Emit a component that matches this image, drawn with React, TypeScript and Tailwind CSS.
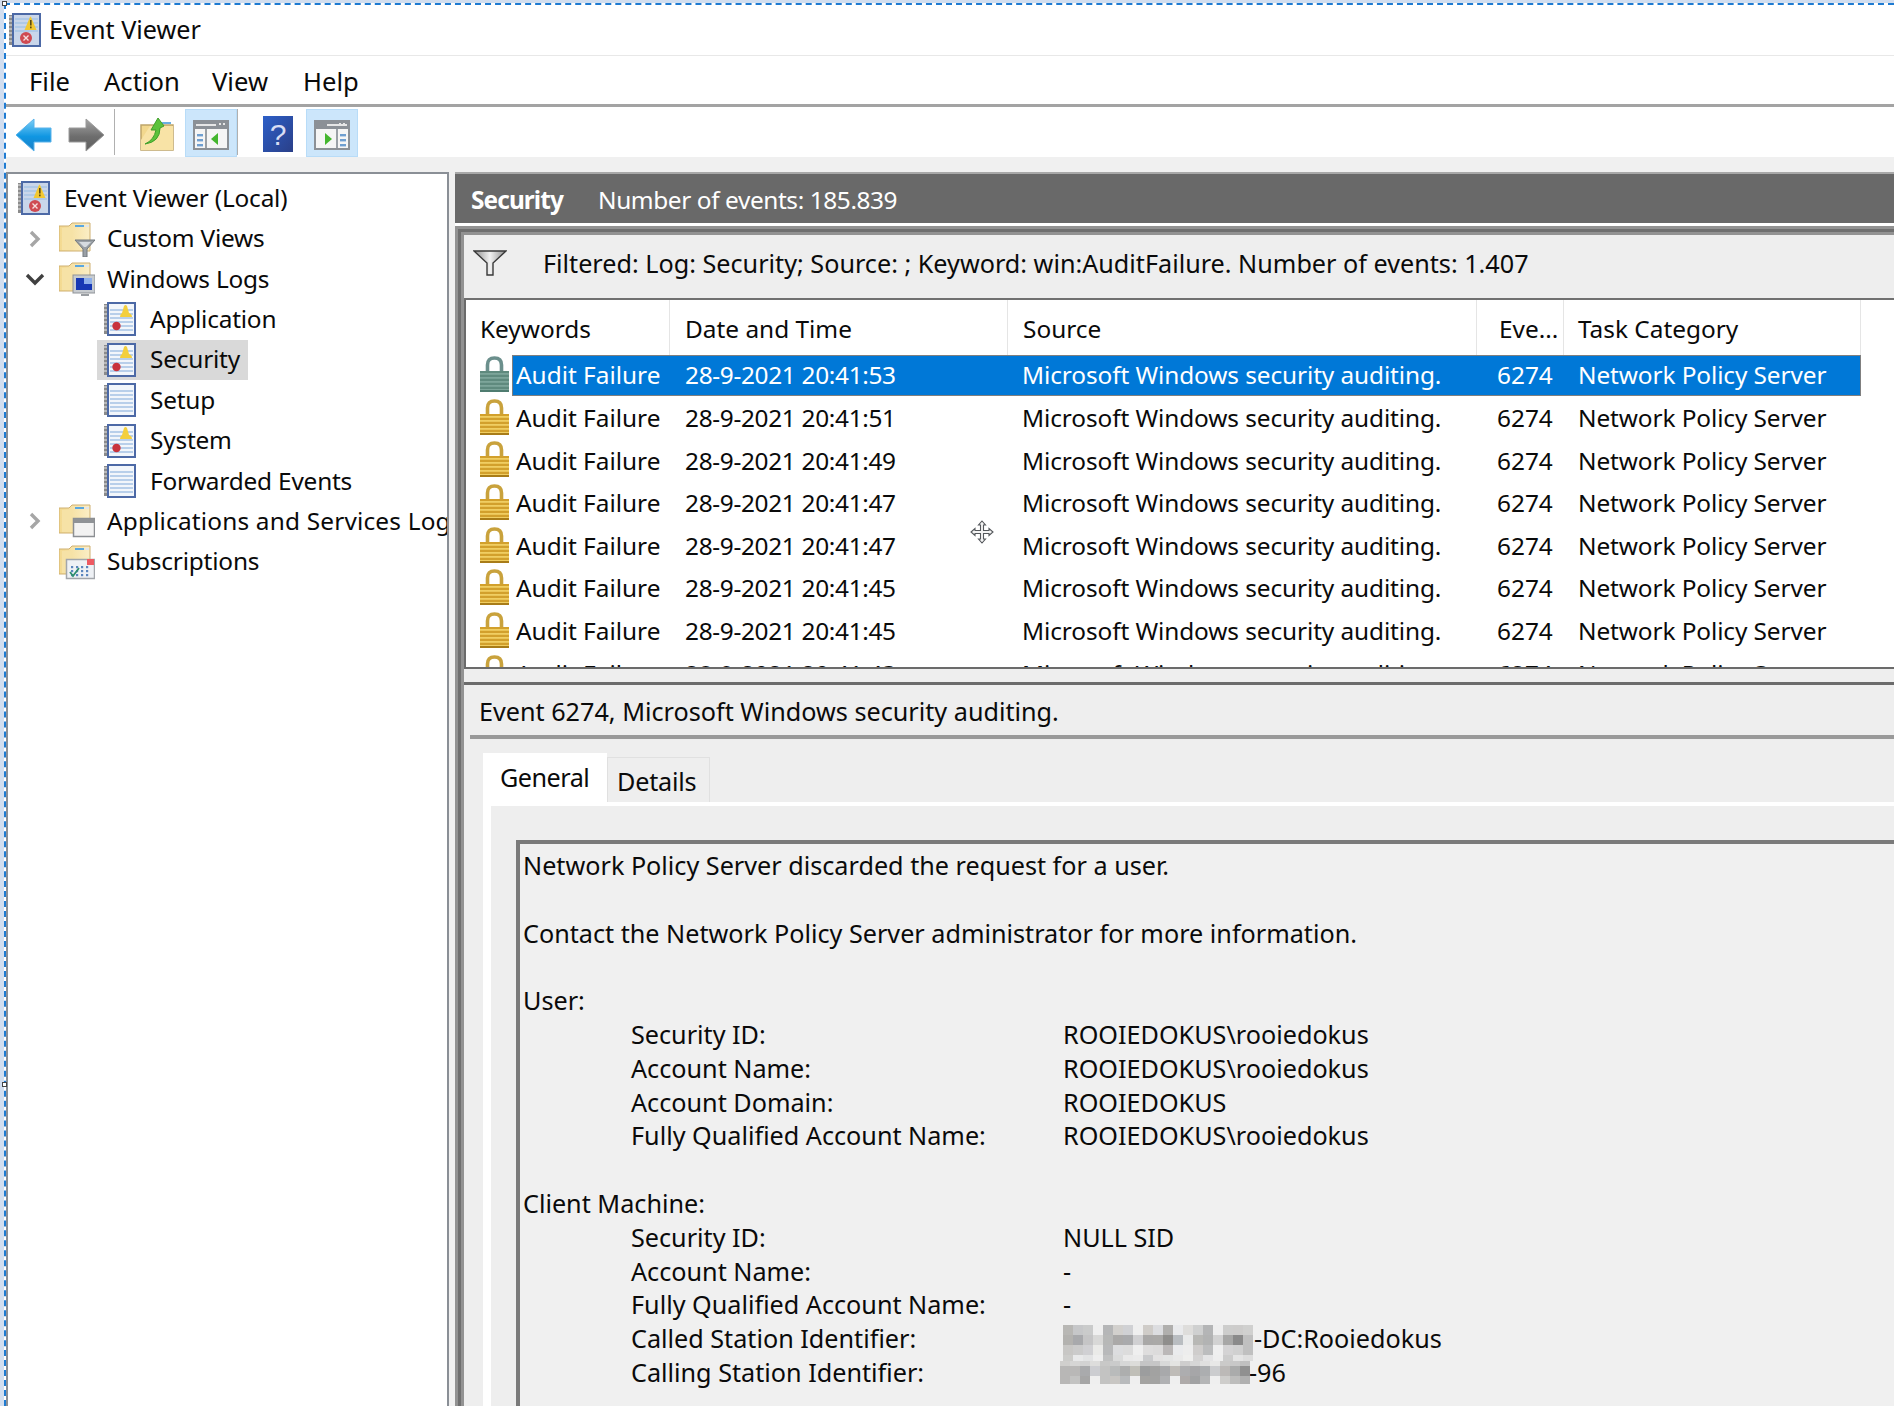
import type { ReactNode } from "react";

const rows = ["20:41:53", "20:41:51", "20:41:49", "20:41:47", "20:41:47", "20:41:45", "20:41:45", "20:41:43"];

// pixelated parts of the redacted station identifiers
const mosaicTop = [
  ["b8b7b4", "c6c7c9", "cacbcb", "efefef", "b5b6b7", "d2d0cd", "d0d1d4", "efefef", "cfccc8", "dcdde0", "b0afad", "e9eaec", "dedddb", "cfd0d0", "b4b5b6", "eeeeee", "cdcdcc", "cdcccb", "d0d0cf"],
  ["b3b2af", "a8a9ac", "c5c5c6", "d8d8d7", "b7b8b7", "aaa9a8", "a9aaac", "d0d0d2", "a9a8a7", "aaa9a7", "8f8e8c", "b9bdc1", "e9eaea", "b8b8b5", "b2b3b3", "d2d2d2", "a7a7a6", "8a8a8a", "c0c0c0"],
  ["c8c7c5", "cbcbcb", "d0d0d3", "eaeae8", "b8b9ba", "dcdddf", "dcdcdc", "efefef", "dedddd", "dcdbdb", "bbb8b8", "eaebed", "ededed", "cfcdcc", "bcbdbe", "efefef", "d4d3d4", "d0d0d0", "c0c0c0"],
  ["ccccca", "e8e9ea", "e2e3e4", "eeeeee", "c0c1c1", "dadbdb", "e9e9e9", "ebebeb", "c9cacc", "e3e2e2", "e4e5e5", "e9e9e9", "efefee", "d4d3d3", "e4e4e5", "eeeeee", "cccccc", "e4e4e4", "dddddd"],
];
const mosaicBottom = [
  ["d0cfcd", "d6d6d5", "d2d2d2", "dddddc", "c8c8c7", "cacbcb", "d6d7d7", "dcdcd9", "c4c4c5", "c6c6c6", "d8d9d9", "e4e4e2", "cecdcd", "d6d6d6", "e0e0df", "e8e8e7", "cbcac9", "c8c8c8", "c0c0c0"],
  ["b8b7b6", "b9b8b7", "a9aaac", "cccdd1", "c3c3c2", "b9bbbb", "adaeae", "c0bfb8", "9c9d9e", "a2a2a1", "a8a9ab", "bfbcb8", "adadaf", "a6a6a8", "acaeb0", "cbccce", "bcb9b7", "aaabab", "909090"],
  ["b8b7b6", "c3c3c2", "a6a6a6", "efefef", "c3c3c2", "c8c6c3", "b8babc", "efefef", "a4a3a1", "a3a3a2", "b0b1b3", "efefef", "aeaaa9", "a1a2a3", "b4b5b6", "efefef", "cecdcb", "bdbdbc", "b0b0b0"],
];

function Mosaic({ data, heights }: { data: string[][]; heights: number[] }) {
  const total = heights.reduce((a, b) => a + b, 0);
  let y = 0;
  return (
    <svg width={190} height={total} viewBox={`0 0 190 ${total}`} shapeRendering="crispEdges">
      {data.map((row, r) => {
        const top = y;
        y += heights[r];
        return row.map((c, i) => (
          <rect key={`${r}-${i}`} x={i * 10} y={top} width={10} height={heights[r]} fill={`#${c}`} />
        ));
      })}
    </svg>
  );
}

function Book({ alert = false, size = 32 }: { alert?: boolean; size?: number }) {
  return (
    <svg width={size} height={(size * 34) / 32} viewBox="0 0 32 34" className="shrink-0">
      <rect x="0" y="2" width="6" height="30" fill="#8b8b8b" />
      {[4, 8, 12, 16, 20, 24, 28].map((y) => (
        <line key={y} x1="0" x2="6" y1={y} y2={y} stroke="#d4d4d4" strokeWidth="1.3" />
      ))}
      <rect x="4" y="1" width="27" height="32" fill="#f2f6fb" stroke="#4c69a6" strokeWidth="2" />
      {[8, 12, 16, 20, 24, 28].map((y) => (
        <line key={y} x1="6" x2="29" y1={y} y2={y} stroke="#a9c6e6" strokeWidth="1.6" />
      ))}
      {alert && (
        <>
          <path d="M16 15 Q16 12 18 11 L20 4 Q21.5 2 23 4 L25 11 Q28 12 28 15 Z" fill="#f3cf3e" />
          <circle cx="12.5" cy="24" r="4.2" fill="#c8323c" />
        </>
      )}
    </svg>
  );
}

function AppIcon() {
  return (
    <svg width="32" height="34" viewBox="0 0 32 34" className="shrink-0">
      <rect x="0" y="2" width="6" height="30" fill="#8b8b8b" />
      {[4, 8, 12, 16, 20, 24, 28].map((y) => (
        <line key={y} x1="0" x2="6" y1={y} y2={y} stroke="#d4d4d4" strokeWidth="1.3" />
      ))}
      <rect x="4" y="1" width="27" height="32" fill="#c9d6ea" stroke="#4c69a6" strokeWidth="2" />
      {[6, 10, 14, 18].map((y) => (
        <line key={y} x1="6" x2="29" y1={y} y2={y} stroke="#a9c6e6" strokeWidth="1.6" />
      ))}
      <path d="M15.5 17 L21 4 Q21.5 3 22 4 L27.5 17 Z" fill="#f2c832" />
      <rect x="21" y="7" width="1.6" height="5.5" fill="#5a4a12" />
      <rect x="21" y="13.5" width="1.6" height="1.8" fill="#5a4a12" />
      <circle cx="17" cy="25" r="6" fill="#cf4a52" />
      <path d="M14.5 22.5 L19.5 27.5 M19.5 22.5 L14.5 27.5" stroke="#f6dede" strokeWidth="1.4" />
    </svg>
  );
}

function Folder({ overlay }: { overlay?: "funnel" | "monitor" | "window" | "calendar" }) {
  return (
    <svg width="36" height="36" viewBox="0 0 36 36" className="shrink-0">
      <defs>
        <linearGradient id="folderFill" x1="0" y1="0" x2="1" y2="0">
          <stop offset="0" stopColor="#f3d98f" />
          <stop offset="1" stopColor="#fbeec6" />
        </linearGradient>
      </defs>
      <path d="M0 5 H10 L13 2 H31 V30 H0 Z" fill="url(#folderFill)" stroke="#cfb070" strokeWidth="1" />
      <path d="M3 7 H13 V29 H3 Z" fill="#f6e2a6" />
      <rect x="16" y="4" width="9" height="2" fill="#5aa7e0" />
      <rect x="26" y="4" width="4" height="2" fill="#e2e6ea" />
      {overlay === "funnel" && (
        <>
          <path d="M16 19 H36 L28 28 V36 H24 V28 Z" fill="#9aa0a6" stroke="#72787e" strokeWidth="1" />
          <path d="M20 21 H32 L27 26 H25 Z" fill="#d6dbe0" />
        </>
      )}
      {overlay === "monitor" && (
        <>
          <rect x="14" y="14" width="22" height="18" fill="#c8ccd0" stroke="#8f9398" strokeWidth="1" />
          <rect x="17" y="17" width="16" height="12" fill="#1738b4" />
          <rect x="25" y="17" width="8" height="6" fill="#8fb0ea" />
          <rect x="22" y="33" width="8" height="2" fill="#9a9ea3" />
        </>
      )}
      {overlay === "window" && (
        <>
          <rect x="14.5" y="15.5" width="21" height="18" fill="#f2f2f2" stroke="#8c8f93" strokeWidth="1.5" />
          <rect x="15" y="16" width="20" height="4" fill="#8f9296" />
        </>
      )}
      {overlay === "calendar" && (
        <>
          <rect x="7.5" y="15.5" width="28" height="19" fill="#eef1f5" stroke="#a2a6ab" strokeWidth="1.5" />
          <rect x="28" y="15" width="7" height="6" fill="#ee5a62" />
          {[12, 17, 22, 27].map((x) =>
            [22, 26, 30].map((y) => <rect key={`${x}-${y}`} x={x} y={y} width="2.2" height="2.2" fill="#5b86bd" />),
          )}
          <path d="M11 28 L14 32 L20 24" fill="none" stroke="#2f8f6f" strokeWidth="1.8" />
        </>
      )}
    </svg>
  );
}

function Lock({ selected = false }: { selected?: boolean }) {
  const body = selected ? ["#7da59a", "#5f8a7e", "#4f7c70"] : ["#f0ce62", "#d2a02c", "#a87c18"];
  const stroke = selected ? "#6b8f8c" : "#c9a23c";
  return (
    <svg width="29" height="36" viewBox="0 0 29 36" className="shrink-0">
      <path d="M7.5 17 V9 Q7.5 2 14.5 2 Q21.5 2 21.5 9 V17" fill="none" stroke={stroke} strokeWidth="3.6" />
      <rect x="0" y="15" width="29" height="21" fill={body[1]} />
      {[17, 21, 25, 29, 33].map((y) => (
        <rect key={y} x="0" y={y} width="29" height="1.8" fill={body[0]} />
      ))}
      <rect x="0" y="34" width="29" height="2" fill={body[2]} />
    </svg>
  );
}

function ArrowIcon({ dir }: { dir: "left" | "right" }) {
  const left = dir === "left";
  return (
    <svg width="36" height="34" viewBox="0 0 36 34" className={left ? "" : "-scale-x-100"}>
      <defs>
        <linearGradient id={`arrow-${dir}`} x1="0" y1="0" x2="0" y2="1">
          <stop offset="0" stopColor={left ? "#7fd0f7" : "#a6a6a6"} />
          <stop offset="0.55" stopColor={left ? "#0f96e2" : "#6d6d6d"} />
          <stop offset="1" stopColor={left ? "#1f7fc4" : "#5f5f5f"} />
        </linearGradient>
      </defs>
      <path d="M0 17 L18 1 V10 H35 V24 H18 V33 Z" fill={`url(#arrow-${dir})`} stroke={left ? "#58b2ea" : "#9a9a9a"} strokeWidth="1" />
    </svg>
  );
}

function FolderUp() {
  return (
    <svg width="34" height="36" viewBox="0 0 34 36">
      <path d="M1 9 H33 V34 H1 Z" fill="#f2d88e" stroke="#bfa56a" strokeWidth="1.5" />
      <path d="M1 24 L10 10 H33 V34 H1 Z" fill="#f8e3a6" />
      <rect x="22" y="6" width="9" height="2" fill="#6aaee0" />
      <path d="M5 28 Q14 24 16 14 L11 14 L18 2 L24 10 L20 12 Q20 26 5 28 Z" fill="#5cc23a" stroke="#3f9f2a" strokeWidth="1" />
    </svg>
  );
}

function PaneIcon({ flip = false }: { flip?: boolean }) {
  return (
    <svg width="36" height="30" viewBox="0 0 36 30" className={flip ? "-scale-x-100" : ""}>
      <rect x="1" y="1" width="34" height="28" fill="#f5f5f5" stroke="#8b9096" strokeWidth="2" />
      <rect x="1" y="1" width="34" height="8" fill="#8b9096" />
      <rect x="3" y="4" width="20" height="2" fill="#e6e6e6" />
      <rect x={flip ? 5 : 26} y="3" width="2" height="2" fill="#e6e6e6" />
      <rect x={flip ? 9 : 30} y="3" width="2" height="2" fill="#e6e6e6" />
      <rect x="12" y="9" width="2" height="19" fill="#9aa0a6" />
      {[14, 19, 24].map((y) => (
        <rect key={y} x="4" y={y} width="6" height="2.4" fill="#6f9fd0" />
      ))}
      <path d="M18 19 L25 13 V25 Z" fill="#44b62e" />
    </svg>
  );
}

function HelpIcon() {
  return (
    <svg width="30" height="36" viewBox="0 0 30 36">
      <defs>
        <linearGradient id="helpFill" x1="0" y1="0" x2="1" y2="1">
          <stop offset="0" stopColor="#2d5fc8" />
          <stop offset="1" stopColor="#2a3f88" />
        </linearGradient>
      </defs>
      <rect width="30" height="36" fill="url(#helpFill)" />
      <text x="15" y="29" textAnchor="middle" fontSize="30" fill="#d8ddf4" fontFamily="Liberation Sans, sans-serif">
        ?
      </text>
    </svg>
  );
}

function Funnel() {
  return (
    <svg width="34" height="26" viewBox="0 0 34 26">
      <defs>
        <linearGradient id="funnelFill" x1="0" y1="0" x2="1" y2="0">
          <stop offset="0" stopColor="#8c8c8c" />
          <stop offset="0.5" stopColor="#f2f2f2" />
          <stop offset="1" stopColor="#8c8c8c" />
        </linearGradient>
      </defs>
      <path d="M1 1 H33 L20 13 V25 H14 V13 Z" fill="url(#funnelFill)" stroke="#3a3a3a" strokeWidth="1.4" />
    </svg>
  );
}

function MoveCursor() {
  return (
    <svg width="24" height="24" viewBox="0 0 24 24" fill="#f4f4f4" stroke="#55585c" strokeWidth="1.1">
      <path d="M12 1 L15.5 5 H13.5 V10.5 H19 V8.5 L23 12 L19 15.5 V13.5 H13.5 V19 H15.5 L12 23 L8.5 19 H10.5 V13.5 H5 V15.5 L1 12 L5 8.5 V10.5 H10.5 V5 H8.5 Z" />
    </svg>
  );
}

function Chevron({ open = false }: { open?: boolean }) {
  return (
    <svg width={open ? 20 : 16} height="18" viewBox={open ? "0 0 20 18" : "0 0 16 18"} fill="none" strokeWidth="3.4" stroke={open ? "#404040" : "#a6a6a6"} className="shrink-0">
      {open ? <path d="M2 5 L10 13 L18 5" /> : <path d="M4 2 L11 9 L4 16" />}
    </svg>
  );
}

function TreeRow({ indent, icon, label, chevron, active, labelClass = "" }: { indent: "root" | "group" | "item"; icon: ReactNode; label: string; chevron?: "open" | "closed"; active?: boolean; labelClass?: string }) {
  if (indent === "root") {
    return (
      <div className="flex h-[40.4px] items-center pl-[10px]">
        <div className="mr-[14px]">{icon}</div>
        <span>{label}</span>
      </div>
    );
  }
  if (indent === "group") {
    return (
      <div className="flex h-[40.4px] items-center whitespace-nowrap pl-[18px]">
        <div className="flex w-[33px] shrink-0 justify-center pr-[15px]">{chevron && <Chevron open={chevron === "open"} />}</div>
        <div className="mr-[12px] shrink-0">{icon}</div>
        <span className={labelClass}>{label}</span>
      </div>
    );
  }
  return (
    <div className="flex h-[40.4px] items-center pl-[89px]">
      <div className={`flex h-full items-center pl-[7px] pr-[8px] ${active ? "bg-[#d9d9d9]" : ""}`}>
        <div className="mr-[14px]">{icon}</div>
        <span>{label}</span>
      </div>
    </div>
  );
}

function Field({ label, value }: { label: string; value: string }) {
  return (
    <div className="flex h-[33.8px] items-center pl-[108px]">
      <span className="w-[432px]">{label}</span>
      <span>{value}</span>
    </div>
  );
}

function Line({ children }: { children?: ReactNode }) {
  return <div className="flex h-[33.8px] items-center">{children}</div>;
}

export default function App() {
  return (
    <div className="relative h-[1406px] w-[1894px] overflow-hidden bg-[#d2deef] pl-[4px] pt-[3px] text-[25.2px] text-[#0a0a0a] [font-family:'Noto_Sans',sans-serif]">
      <div className="flex h-full flex-col border-l-2 border-t-2 border-dashed border-[#1e7bd2] bg-white">
        {/* Title */}
        <div className="flex h-[51px] shrink-0 items-center border-b border-[#e8e8e8] pl-[3px]">
          <AppIcon />
          <span className="ml-[8px]">Event Viewer</span>
        </div>

        {/* Menu */}
        <div className="flex h-[51px] shrink-0 items-center border-b-[3px] border-[#a3a3a3] pl-[23px] pt-[4px] text-[25.6px]">
          <span className="w-[75px]">File</span>
          <span className="w-[108px]">Action</span>
          <span className="w-[91px]">View</span>
          <span>Help</span>
        </div>

        {/* Toolbar */}
        <div className="flex h-[50px] shrink-0 items-center pl-[10px]">
          <div className="mt-[5px]">
            <ArrowIcon dir="left" />
          </div>
          <div className="ml-[16px] mt-[5px]">
            <ArrowIcon dir="right" />
          </div>
          <div className="ml-[10px] h-[46px] w-[1px] bg-[#b0b0b0]" />
          <div className="ml-[25px] mt-[4px]">
            <FolderUp />
          </div>
          <div className="ml-[11px] mt-[2px] flex h-[48px] w-[52px] items-center justify-center border border-[#b8dcf8] bg-[#cce6fb] pt-[4px]">
            <PaneIcon />
          </div>
          <div className="h-[46px] w-[1px] bg-[#b0b0b0]" />
          <div className="ml-[25px] mt-[4px]">
            <HelpIcon />
          </div>
          <div className="ml-[13px] mt-[2px] flex h-[48px] w-[52px] items-center justify-center border border-[#b8dcf8] bg-[#cce6fb] pt-[4px]">
            <PaneIcon flip />
          </div>
        </div>

        {/* Body */}
        <div className="flex min-h-0 flex-1 bg-[#f0f0f0] pt-[15px]">
          {/* Tree */}
          <div className="w-[443px] shrink-0 overflow-hidden border-2 border-b-0 border-[#8a8f96] bg-white pt-[4px] text-[24.4px] tracking-[-0.2px]">
            <TreeRow indent="root" icon={<AppIcon />} label="Event Viewer (Local)" />
            <TreeRow indent="group" chevron="closed" icon={<Folder overlay="funnel" />} label="Custom Views" />
            <TreeRow indent="group" chevron="open" icon={<Folder overlay="monitor" />} label="Windows Logs" />
            <TreeRow indent="item" icon={<Book alert />} label="Application" />
            <TreeRow indent="item" active icon={<Book alert />} label="Security" />
            <TreeRow indent="item" icon={<Book />} label="Setup" />
            <TreeRow indent="item" icon={<Book alert />} label="System" />
            <TreeRow indent="item" icon={<Book />} label="Forwarded Events" />
            <TreeRow indent="group" chevron="closed" icon={<Folder overlay="window" />} label="Applications and Services Logs" labelClass="tracking-[0.18px]" />
            <TreeRow indent="group" icon={<Folder overlay="calendar" />} label="Subscriptions" />
          </div>

          {/* Right side */}
          <div className="ml-[6px] flex min-w-0 flex-1 flex-col">
            <div className="flex h-[51px] shrink-0 items-center border-t-2 border-[#a8a8a8] bg-[#696969] pl-[16px] pt-[3px] text-[24.4px] text-white">
              <span className="w-[127px] font-bold tracking-[-0.9px]">Security</span>
              <span className="tracking-[-0.4px]">Number of events: 185.839</span>
            </div>
            <div className="h-[3px] shrink-0 bg-white" />

            <div className="min-h-0 flex-1 border-l-[3px] border-t-[3px] border-[#929292]">
              <div className="h-full border-l-[3px] border-t-[3px] border-[#6f6f6f]">
                <div className="h-full border-l-[3px] border-t-[3px] border-[#929292] bg-[#eeeeee]">
                  {/* Filter */}
                  <div className="flex h-[65px] items-center border-b-2 border-[#707070] pb-[5px] pl-[9px]">
                    <div className="-mt-[3px]">
                      <Funnel />
                    </div>
                    <span className="ml-[36px]">Filtered: Log: Security; Source: ; Keyword: win:AuditFailure. Number of events: 1.407</span>
                  </div>

                  {/* Event list */}
                  <div className="relative h-[369px] overflow-hidden border-b-2 border-l-2 border-[#6b6b6b] bg-white text-[24.4px]">
                    <div className="grid h-[55px] grid-cols-[204px_338px_469px_87px_297px] items-stretch">
                      <div className="flex items-center border-r border-[#e5e5e5] pl-[14px] pt-[4px]">Keywords</div>
                      <div className="flex items-center border-r border-[#e5e5e5] pl-[15px] pt-[4px]">Date and Time</div>
                      <div className="flex items-center border-r border-[#e5e5e5] pl-[15px] pt-[4px]">Source</div>
                      <div className="flex items-center border-r border-[#e5e5e5] pl-[22px] pt-[4px]">Eve...</div>
                      <div className="flex items-center border-r border-[#e5e5e5] pl-[14px] pt-[4px]">Task Category</div>
                    </div>
                    {rows.map((time, i) => (
                      <div key={i} className="flex h-[42.67px] items-start pl-[14px]">
                        <div className="pt-[1px]">
                          <Lock selected={i === 0} />
                        </div>
                        <div className={`ml-[3px] grid h-[41px] w-[1349px] grid-cols-[172px_337px_475px_81px_284px] items-center border ${i === 0 ? "border-[#7f7f7f] bg-[#0078d7] text-white" : "border-transparent"}`}>
                          <span className="pl-[3px]">Audit Failure</span>
                          <span className="tracking-[-0.32px]">28-9-2021 {time}</span>
                          <span className="tracking-[-0.1px]">Microsoft Windows security auditing.</span>
                          <span>6274</span>
                          <span className="tracking-[-0.1px]">Network Policy Server</span>
                        </div>
                      </div>
                    ))}
                    <div className="absolute left-[504px] top-[220px]">
                      <MoveCursor />
                    </div>
                  </div>

                  <div className="h-[13px]" />
                  <div className="h-[3px] bg-[#6b6b6b]" />

                  {/* Event detail */}
                  <div className="flex h-[50px] items-center pl-[15px] pt-[3px]">Event 6274, Microsoft Windows security auditing.</div>
                  <div className="ml-[6px] h-[4px] bg-[#999999]" />

                  <div className="ml-[19px] mt-[14px] flex h-[49px] items-start">
                    <div className="flex h-[49px] w-[124px] items-center bg-white pl-[17px] pt-[1px] tracking-[-0.5px]">General</div>
                    <div className="mt-[4px] flex h-[45px] w-[103px] items-center border border-b-0 border-[#e0e0e0] pl-[9px] pt-[3px] tracking-[-0.2px]">Details</div>
                  </div>
                  <div className="ml-[19px] h-[640px] border-l-[8px] border-t-[4px] border-white bg-[#eeeeee] pl-[25px] pt-[34px]">
                    <div className="h-full border-l-4 border-t-4 border-[#7a7a7a] bg-[#f0f0f0] pl-[3px] pt-[5px]">
                      <Line>Network Policy Server discarded the request for a user.</Line>
                      <Line />
                      <Line>Contact the Network Policy Server administrator for more information.</Line>
                      <Line />
                      <Line>User:</Line>
                      <Field label="Security ID:" value="ROOIEDOKUS\rooiedokus" />
                      <Field label="Account Name:" value="ROOIEDOKUS\rooiedokus" />
                      <Field label="Account Domain:" value="ROOIEDOKUS" />
                      <Field label="Fully Qualified Account Name:" value="ROOIEDOKUS\rooiedokus" />
                      <Line />
                      <Line>Client Machine:</Line>
                      <Field label="Security ID:" value="NULL SID" />
                      <Field label="Account Name:" value="-" />
                      <Field label="Fully Qualified Account Name:" value="-" />
                      <div className="relative">
                        <div className="flex h-[33.8px] items-center pl-[108px]">
                          <span className="w-[432px]">Called Station Identifier:</span>
                          <span className="pl-[191px]">-DC:Rooiedokus</span>
                        </div>
                        <div className="absolute left-[540px] top-[3px]">
                          <Mosaic data={mosaicTop} heights={[10, 10, 10, 6]} />
                        </div>
                      </div>
                      <div className="relative">
                        <div className="flex h-[33.8px] items-center pl-[108px]">
                          <span className="w-[432px]">Calling Station Identifier:</span>
                          <span className="pl-[186px]">-96</span>
                        </div>
                        <div className="absolute left-[537px] top-[5px]">
                          <Mosaic data={mosaicBottom} heights={[5, 10, 8]} />
                        </div>
                      </div>
                    </div>
                  </div>
                </div>
              </div>
            </div>
          </div>
        </div>
      </div>

      {/* selection handles of the capture tool */}
      <div className="absolute left-[2px] top-[1px] h-[5px] w-[5px] border border-[#444444] bg-white" />
      <div className="absolute left-[2px] top-[1082px] h-[5px] w-[5px] border border-[#444444] bg-white" />
    </div>
  );
}
